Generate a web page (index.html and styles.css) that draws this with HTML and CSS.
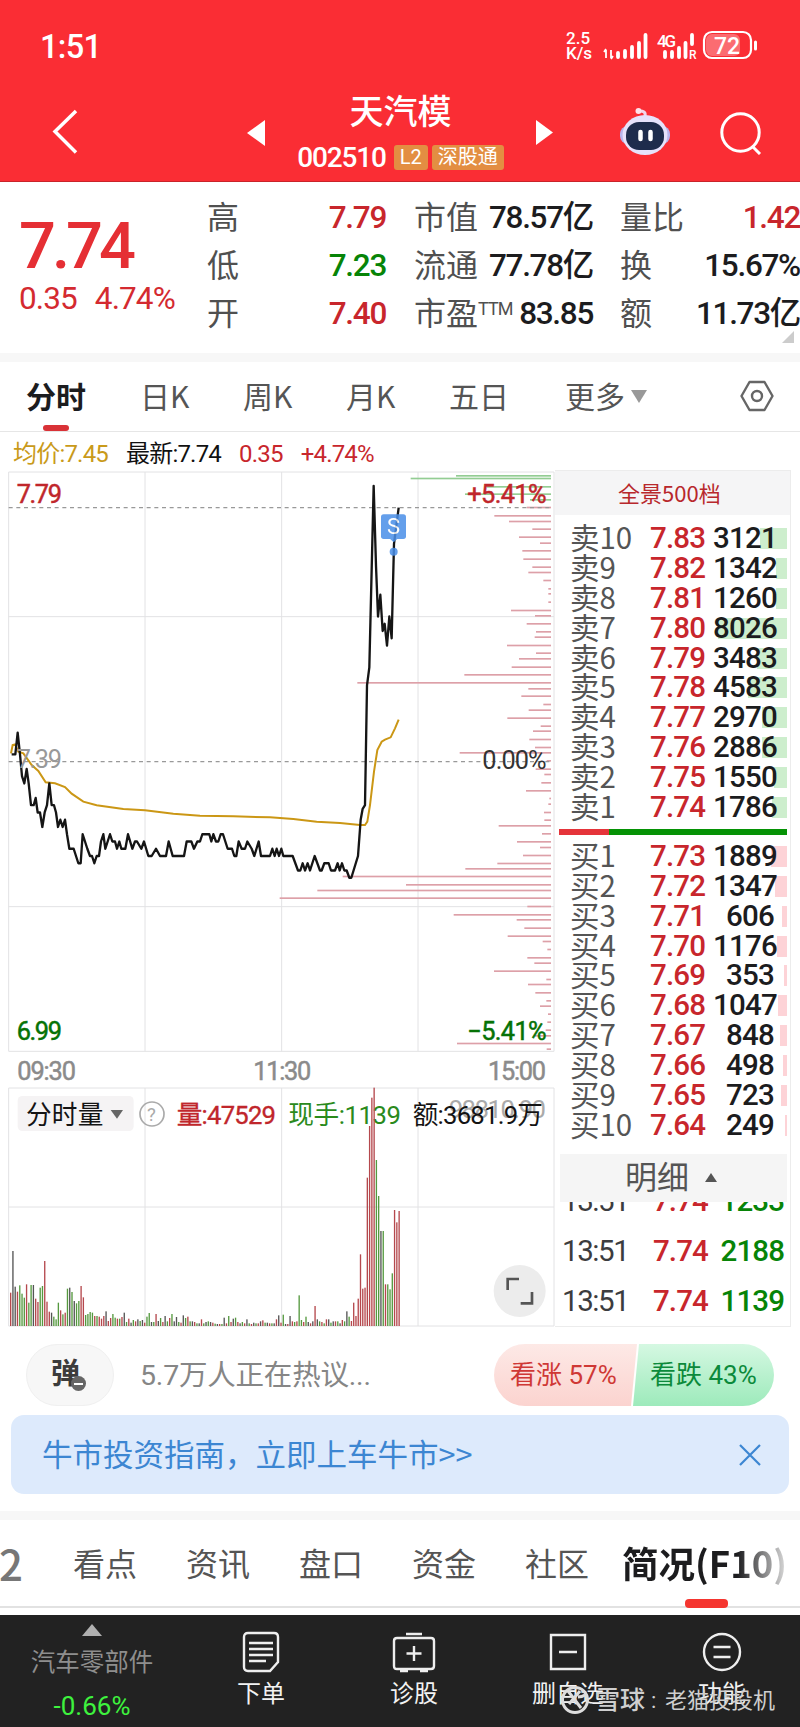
FILE: index.html
```html
<!DOCTYPE html>
<html lang="zh-CN">
<head>
    <meta charset="UTF-8">
    <meta name="viewport" content="width=device-width, initial-scale=1.0">
    <title>天汽模 002510</title>
    <link rel="stylesheet" href="styles.css">
</head>
<body>

<header class="header">
    <div class="status-bar">
        <span class="clock">1:51</span>
        <span class="speed">2.5<br>K/s</span>
        <svg class="signals" width="160" height="32" viewBox="0 0 160 32" fill="none" stroke="#fff">
            <path d="M4 28V20M2 22l2-3M9 20v8M11 26l-2 3" stroke-width="1.8"/>
            <path d="M16 27v-4M23 27v-6M30 27v-10M37 27v-14M43.500 27V5" stroke-width="3.800" stroke-linecap="round"/>
            <text x="55" y="17" textLength="19" class="net">4G</text>
            <path d="M63 27v-5M70 27v-5M77 27v-9M83.500 27v-14M90 14V5" stroke-width="3.800" stroke-linecap="round"/>
            <text x="87" y="29" class="roam">R</text>
            <rect x="102" y="2" width="47" height="26" rx="8" stroke-width="2.200"/>
            <rect x="104" y="4" width="34" height="22" rx="6" fill="#fff" fill-opacity=".3" stroke="none"/>
            <path d="M153.500 12v7" stroke-width="3" stroke-linecap="round"/>
            <text x="112" y="24" class="battery">72</text>
        </svg>
    </div>
    <div class="nav">
        <svg class="back" width="30" height="50" viewBox="0 0 30 50" fill="none" stroke="#fff" stroke-width="3.500"><path d="M25 4L4 24.500l21 21"/></svg>
        <svg class="prev" width="18" height="26" viewBox="0 0 18 26"><path d="M18 0v26L0 13z" fill="#fff"/></svg>
        <div class="stock">
            <h1>天汽模</h1>
            <div class="code"><span class="num">002510</span><span class="badge">L2</span><span class="badge">深股通</span></div>
        </div>
        <svg class="next" width="17" height="25" viewBox="0 0 17 25"><path d="M0 0v25l17-12.500z" fill="#fff"/></svg>
        <svg class="robot" width="54" height="50" viewBox="0 0 54 50">
            <path d="M27 9c1-4-2-5-5-5" fill="none" stroke="#f2d5e8" stroke-width="3"/>
            <circle cx="20.500" cy="4" r="3" fill="#ffe1ea"/>
            <rect x="2" y="19" width="50" height="18" rx="8" fill="#b9b5ee"/>
            <ellipse cx="27" cy="28" rx="22.500" ry="20" fill="#e6e2fb"/>
            <rect x="8" y="15" width="38" height="28" rx="13" fill="#1e2c4c"/>
            <path d="M22.500 25v7M32.500 25v7" stroke="#fff" stroke-width="4.500" stroke-linecap="round"/>
        </svg>
        <svg class="search" width="44" height="44" viewBox="0 0 44 44" fill="none" stroke="#fff" stroke-width="3"><circle cx="21.500" cy="21.500" r="18.700"/><path d="M33 35l8 8"/></svg>
    </div>
</header>

<section class="quote">
    <div class="price">
        <div class="last">7.74</div>
        <div class="change"><span>0.35</span><span>4.74%</span></div>
    </div>
    <dl class="col col-a">
        <dt>高</dt><dd class="up">7.79</dd>
        <dt>低</dt><dd class="down">7.23</dd>
        <dt>开</dt><dd class="up">7.40</dd>
    </dl>
    <dl class="col col-b">
        <dt>市值</dt><dd>78.57亿</dd>
        <dt>流通</dt><dd>77.78亿</dd>
        <dt>市盈<sup>TTM</sup></dt><dd>83.85</dd>
    </dl>
    <dl class="col col-c">
        <dt>量比</dt><dd class="up">1.42</dd>
        <dt>换</dt><dd>15.67%</dd>
        <dt>额</dt><dd>11.73亿</dd>
    </dl>
    <i class="corner"></i>
</section>

<nav class="periods">
    <a class="active">分时</a>
    <a>日K</a>
    <a>周K</a>
    <a>月K</a>
    <a>五日</a>
    <a>更多</a>
    <i class="caret"></i>
    <svg class="gear" width="36" height="36" viewBox="0 0 36 36" fill="none" stroke="#666" stroke-width="2.400"><path d="M10.500 4h15L33.500 18l-8 14h-15L2.500 18z" stroke-linejoin="round"/><circle cx="18" cy="18" r="5"/></svg>
</nav>

<main class="main">
    <div class="charts">
        <div class="info"><span class="avg">均价:7.45</span><span>最新:7.74</span><span class="up">0.35</span><span class="up">+4.74%</span></div>

        <svg class="chart" width="555" height="615" viewBox="0 0 1665 1845">
            <g class="grid">
                <path d="M26 21H1662V1759H26zM435 21V1759M845 21V1759M1254 21V1759M26 455H1662M26 1325H1662"/>
            </g>
            <g id="levels"></g>
            <path class="dash" d="M26 128H1653M26 890H1653"/>
            <polyline class="avg-line" points="33,865 38,840 45,838 55,860 70,865 95,900 115,918 137,952 165,955 195,966 215,986 250,1010 290,1021 370,1032 435,1036 520,1046 600,1052 700,1054 810,1057 880,1062 950,1070 1020,1074 1080,1080 1095,1080 1102,1070 1110,1020 1122,920 1132,855 1145,830 1155,824 1172,817 1185,790 1196,764"/>
            <polyline id="priceLine" class="price-line"/>
            <g class="mark">
                <rect x="1143" y="148" width="75" height="74" rx="8"/>
                <path d="M1168 220h26l-13 12z"/>
                <circle cx="1181" cy="260" r="12"/>
                <text x="1161" y="208">S</text>
            </g>
            <g class="axis">
                <text x="50" y="113" textLength="136" class="t-up">7.79</text>
                <text x="50" y="909" textLength="136" class="t-mid">7.39</text>
                <text x="50" y="1725" textLength="136" class="t-down">6.99</text>
                <text x="1402" y="113" textLength="238" class="t-up">+5.41%</text>
                <text x="1447" y="911" textLength="193">0.00%</text>
                <text x="1402" y="1725" textLength="238" class="t-down">−5.41%</text>
                <text x="52" y="1844" textLength="176" class="t-time">09:30</text>
                <text x="760" y="1844" textLength="174" class="t-time">11:30</text>
                <text x="1464" y="1844" textLength="174" class="t-time">15:00</text>
            </g>
        </svg>

        <svg class="chart" width="555" height="250" viewBox="0 0 1665 750">
            <g class="grid">
                <path d="M26 24H1662V738H26zM435 24V738M845 24V738M1254 24V738M26 381H1662"/>
            </g>
            <rect x="53" y="48" width="348" height="105" rx="14" fill="#f5f3f4"/>
            <path d="M332 90h37l-18 26z" fill="#666"/>
            <circle cx="456" cy="102" r="36" fill="none" stroke="#aaa" stroke-width="5"/>
            <g class="legend">
                <text x="441" y="122" class="help">?</text>
                <text x="78" y="131" textLength="232">分时量</text>
                <text x="530" y="131" textLength="298" class="t-up">量:47529</text>
                <text x="865" y="131" textLength="338" class="t-green">现手:1139</text>
                <text x="1346" y="114" textLength="292" class="ghost">98810.90</text>
                <text x="1238" y="131" textLength="391">额:3681.9万</text>
            </g>
            <g id="volume"></g>
            <circle cx="1559" cy="633" r="78" fill="#ececec"/>
            <path d="M1523 630V597h34M1596 636v34h-34" fill="none" stroke="#555" stroke-width="8"/>
        </svg>
    </div>

    <aside class="book">
        <div class="book-head">全景500档</div>
        <div class="rows" id="asks"></div>
        <div class="ratio"><i></i></div>
        <div class="rows" id="bids"></div>
        <div class="detail-head">明细<i></i></div>
        <div class="ticks">
            <div class="tick"><span>13:51</span><span class="up">7.74</span><span class="down">1233</span></div>
            <div class="tick"><span>13:51</span><span class="up">7.74</span><span class="down">2188</span></div>
            <div class="tick"><span>13:51</span><span class="up">7.74</span><span class="down">1139</span></div>
        </div>
    </aside>
</main>

<section class="talk">
    <div class="danmu">弹<i></i></div>
    <div class="talk-text">5.7万人正在热议...</div>
    <div class="vote"><span class="bull">看涨 57%</span><span class="bear">看跌 43%</span></div>
</section>

<section class="banner">
    <span>牛市投资指南，立即上车牛市&gt;&gt;</span>
    <svg width="24" height="24" viewBox="0 0 24 24" fill="none" stroke="#3c86d2" stroke-width="2.200"><path d="M2 2l20 20M22 2L2 22"/></svg>
</section>

<nav class="sections">
    <a class="cut">2</a>
    <a>看点</a>
    <a>资讯</a>
    <a>盘口</a>
    <a>资金</a>
    <a>社区</a>
    <a class="active">简况(F10)</a>
</nav>

<footer class="toolbar">
    <div class="sector">
        <i></i>
        <span>汽车零部件</span>
        <b>-0.66%</b>
    </div>
    <div class="tool">
        <svg width="44" height="44" viewBox="0 0 44 44"><path d="M9 3h26q4 0 4 4v25l-8 9H9q-4 0-4-4V7q0-4 4-4zM10 13h24M10 19h24M10 25h24M10 31h17"/></svg>
        <span>下单</span>
    </div>
    <div class="tool">
        <svg width="44" height="44" viewBox="0 0 44 44"><path d="M14 4h16M5 8h34q3 0 3 3v25q0 3-3 3H5q-3 0-3-3V11q0-3 3-3zM22 16v15M14.500 23.500h15M8 41h8M28 41h8"/></svg>
        <span>诊股</span>
    </div>
    <div class="tool">
        <svg width="44" height="44" viewBox="0 0 44 44"><path d="M5 5h34v34H5zM13 22h18"/></svg>
        <span>删自选</span>
    </div>
    <div class="tool">
        <svg width="44" height="44" viewBox="0 0 44 44"><path d="M13.500 17h17M13.500 27h17"/><circle cx="22" cy="22" r="18"/></svg>
        <span>功能</span>
    </div>
    <div class="watermark">
        <svg width="30" height="30" viewBox="0 0 30 30" fill="none" stroke="#ddd" stroke-width="3"><circle cx="15" cy="15" r="12.500"/><path d="M8 6l13 17M20 6L9 19M18 12c4 0 7-2 7-2"/></svg>
        <span class="brand">雪球</span><span class="colon">:</span><span>老猫投投机</span>
    </div>
</footer>

<script>
    const NS = 'http://www.w3.org/2000/svg';

    const asks = [[7.83, 3121], [7.82, 1342], [7.81, 1260], [7.80, 8026], [7.79, 3483], [7.78, 4583], [7.77, 2970], [7.76, 2886], [7.75, 1550], [7.74, 1786]];
    const bids = [[7.73, 1889], [7.72, 1347], [7.71, 606], [7.70, 1176], [7.69, 353], [7.68, 1047], [7.67, 848], [7.66, 498], [7.65, 723], [7.64, 249]];

    // x position, price in cents over 7.00
    const prices = [
        35,40, 46,40, 53,43, 60,40, 66,37, 73,36, 80,38, 86,36, 93,33, 101,33, 107,34, 113,32, 120,32, 127,30, 134,32, 141,33,
        148,36, 155,33, 162,33, 168,32, 174,30, 181,31, 188,30, 195,31, 201,29, 208,27, 221,27, 235,25, 242,25, 248,29, 262,27,
        270,26, 276,26, 283,25, 290,26, 297,26, 303,28, 310,29, 316,27, 330,29, 337,28, 345,28, 351,27, 358,28, 364,27, 376,27,
        384,29, 397,27, 405,28, 411,28, 424,27, 432,28, 445,26, 455,26, 468,27, 480,26, 498,26, 506,28, 518,26, 552,26, 560,28,
        574,28, 582,27, 592,28, 600,28, 607,29, 628,29, 634,28, 640,29, 648,28, 655,28, 662,29, 669,29, 683,27, 696,27, 703,26,
        709,26, 716,28, 725,27, 735,27, 742,28, 755,27, 763,26, 776,28, 783,26, 810,26, 817,27, 824,26, 830,27, 837,26, 844,27,
        850,26, 878,26, 894,24, 901,24, 908,25, 915,24, 923,25, 930,24, 944,26, 960,24, 965,24, 973,25, 986,25, 993,24, 1005,24,
        1013,25, 1019,24, 1026,25, 1033,24, 1040,24, 1048,23, 1054,23, 1074,26, 1082,31, 1088,32.5, 1095,33, 1101,49.5, 1108,52,
        1121,77, 1128,66, 1134,59, 1141,62, 1148,57, 1154,58, 1161,55, 1168,59, 1175,56, 1182,69, 1196,74
    ];

    // y position, bar length
    const levels = [
        33,285, 41,421, 66,193, 88,258, 105,63, 128,73, 153,170, 170,126, 193,56, 217,96, 235,33, 258,86, 283,83, 307,56, 323,68,
        347,23, 372,8, 387,8, 412,8, 437,120, 453,48, 477,73, 501,45, 517,49, 542,132, 565,45, 582,96, 607,118, 630,260, 654,581,
        672,68, 694,89, 719,23, 736,67, 760,131, 784,31, 799,54, 824,65, 848,48, 864,274, 888,13, 913,46, 929,20, 954,29, 978,75,
        1001,5, 1018,8, 1043,21, 1066,20, 1083,157, 1107,27, 1131,102, 1148,33, 1172,84, 1196,161, 1212,257, 1235,625, 1260,435,
        1277,701, 1300,814, 1325,71, 1350,292, 1365,103, 1390,80, 1414,130, 1430,25, 1454,11, 1479,71, 1495,50, 1519,171, 1544,14,
        1559,69, 1584,47, 1608,14, 1624,33, 1648,9, 1672,11, 1696,16, 1713,50, 1736,282, 1753,13
    ];

    const volume = ('100r 225k 118k 103r 122g 97g 85g 125r 70g 123g 123k 82r 72r 115g 120g 195r 73r 43r 40k 28g 20g 70g 47r 35g 40r 112g 115k 102g 75k 68g 75g 120r 86r ' +
        '33g 36g 42g 40g 30r 30g 28r 22r 30r 44k 15r 24r 36g 25g 22r 22g 27r 40k 12g 22r 10k 18g 14r 20k 15g 18k 10r 28g 39g 12k 12g 36r 15k 24g 12r 30k 14g 24r 36g ' +
        '14k 27k 12g 10r 32k 24g 28r 14g 14k 12r 8g 8k 20r 8g 12k 14g 12k 10r 7g 6k 6r 6g 25k 8r 30g 12r 22k 25g 12r 8k 12g 8r 20k 8g 6r 10k 8g 8r 14k 17r 10g 10k ' +
        '8r 8g 8k 20r 32k 10r 34g 6k 6r 30k 14r 12g 14r 92g 18g 12r 28g 12k 8r 14k 60r 20k 14g 12r 8g 20r 20k 10g 14k 14r 14g 8k 18r 14g 44k 28g 15r 70r 30r 82r ' +
        '215r 112r 115r 445r 600r 685r 715r 498g 390g 285k 285g 125r 125g 110g 158g 348r 311r 345r').split(' ');

    function drawRows(id, name, data, start, step) {
        document.getElementById(id).innerHTML = data.map((d, i) =>
            `<div class="row"><i style="width:${(d[1] * 0.0086).toFixed(1)}px"></i><span class="level">${name}${start + i * step}</span>` +
            `<span class="up">${d[0].toFixed(2)}</span><span class="amount">${d[1]}</span></div>`).join('');
    }

    function addRect(parent, x, y, w, h, cls) {
        const rect = document.createElementNS(NS, 'rect');
        rect.setAttribute('x', x);
        rect.setAttribute('y', y);
        rect.setAttribute('width', w);
        rect.setAttribute('height', h);
        rect.setAttribute('class', cls);
        parent.appendChild(rect);
    }

    drawRows('asks', '卖', asks, 10, -1);
    drawRows('bids', '买', bids, 1, 1);

    let points = '';
    for (let i = 0; i < prices.length; i += 2) {
        points += prices[i] + ',' + (890 - (prices[i + 1] - 39) * 21.77).toFixed(1) + ' ';
    }
    document.getElementById('priceLine').setAttribute('points', points);

    const levelGroup = document.getElementById('levels');
    for (let i = 0; i < levels.length; i += 2) {
        addRect(levelGroup, 1653 - levels[i + 1], levels[i] - 3, levels[i + 1], 5, levels[i] < 110 ? 'lv-green' : 'lv-red');
    }

    const volumeGroup = document.getElementById('volume');
    volume.forEach((v, i) => {
        const h = parseInt(v);
        addRect(volumeGroup, (30 + i * 6.815).toFixed(1), 738 - h, 4, h, 'v-' + v.slice(-1));
    });
</script>

</body>
</html>
```
FILE: styles.css
```css
* {
    box-sizing: border-box;
}

body {
    margin: 0;
    width: 800px;
    height: 1727px;
    overflow: hidden;
    background: #fff;
    color: #1c1c1e;
    font-family: Roboto, 'Noto Sans CJK SC', sans-serif;
}

h1, dl, dd {
    margin: 0;
}

svg {
    display: block;
    flex: none;
}

.up {
    color: #c8262c;
}

.down {
    color: #078407;
}

/* header */
.header {
    height: 182px;
    background: #fa2d34;
    border-bottom: 1px solid #c9242a;
    color: #fff;
}

.status-bar {
    display: flex;
    height: 90px;
    padding: 30px 42px 0 40px;
}

.clock {
    font-size: 32.5px;
    font-weight: 500;
    line-height: 34px;
    letter-spacing: -0.7px;
}

.speed {
    margin-left: auto;
    width: 36px;
    padding-top: 1px;
    font-size: 17px;
    font-weight: 500;
    line-height: 15px;
}

.signals text {
    fill: #fff;
    stroke: none;
    font-weight: 500;
}

.signals {
    margin-right: -4px;
}

.net {
    font-size: 17px;
}

.roam {
    font-size: 12px;
}

.battery {
    font-size: 23px;
}

.nav {
    display: flex;
    height: 91px;
    padding-left: 51px;
}

.back {
    margin-top: 17px;
}

.prev {
    margin: 30px 0 0 166px;
}

.stock {
    width: 271px;
    text-align: center;
}

.stock h1 {
    font-size: 34px;
    line-height: 40px;
    font-weight: 500;
    font-family: 'Noto Sans CJK SC', sans-serif;
}

.code {
    display: flex;
    justify-content: center;
    gap: 4px;
    margin-top: 14px;
    font-size: 28px;
    line-height: 28px;
    letter-spacing: -1.2px;
}

.code .num {
    margin-right: 4px;
    font-weight: 500;
}

.badge {
    height: 25px;
    margin-top: 1px;
    padding: 0 6px;
    border-radius: 3px;
    background: #e38e42;
    font-size: 20px;
    line-height: 24px;
    letter-spacing: 0;
}

.next {
    margin: 30px 0 0 0;
}

.robot {
    margin: 17px 0 0 65px;
}

.search {
    margin: 21px 0 0 47px;
}

/* quote */
.quote {
    position: relative;
    display: flex;
    height: 171px;
    padding-top: 12px;
}

.price {
    width: 207px;
    padding: 19px 0 0 19px;
    color: #e52f34;
}

.last {
    font-size: 65px;
    line-height: 66px;
    font-weight: 500;
    letter-spacing: -4px;
}

.change {
    display: flex;
    gap: 18px;
    margin-top: 3px;
    font-size: 31.5px;
    line-height: 34px;
    letter-spacing: -0.9px;
    color: #d42a30;
}

.col {
    display: grid;
    grid-template-columns: 66px 1fr;
    grid-auto-rows: 48px;
    font-size: 32px;
    line-height: 48px;
}

.col dt {
    color: #505050;
    white-space: nowrap;
}

.col dd {
    text-align: right;
    font-size: 31.5px;
    font-weight: 500;
    letter-spacing: -1.3px;
    white-space: nowrap;
}

.col-a {
    width: 179px;
}

.col-b {
    width: 179px;
    margin-left: 28px;
}

.col-c {
    width: 180px;
    margin-left: 27px;
}

sup {
    font-size: 18px;
    line-height: 0;
    vertical-align: 10px;
    letter-spacing: -1px;
}

.corner {
    position: absolute;
    right: 6px;
    bottom: 10px;
    border: 6px solid transparent;
    border-right-color: #ccc;
    border-bottom-color: #ccc;
}

/* period tabs */
.periods {
    display: flex;
    height: 79px;
    padding-left: 26px;
    border-top: 9px solid #f7f7f7;
    border-bottom: 1px solid #e6e6e6;
    font-size: 30px;
    line-height: 66px;
    color: #555;
    font-family: 'Noto Sans CJK SC', sans-serif;
}

.periods a {
    width: 103px;
}

.periods a:first-child {
    width: 114px;
}

.periods a:nth-child(2) {
    width: 103px;
}

.periods a:nth-child(5) {
    width: 116px;
}

.periods a:nth-child(6) {
    width: 66px;
}

.periods .active {
    position: relative;
    color: #1c1c1e;
    font-weight: 700;
}

.periods .active::after {
    content: '';
    position: absolute;
    left: 17px;
    bottom: 0;
    width: 26px;
    height: 6px;
    border-radius: 3px;
    background: #d93237;
}

.caret {
    height: 13px;
    margin-top: 28px;
    border: 8px solid transparent;
    border-top: 13px solid #999;
    border-bottom: 0;
}

.gear {
    margin: 16px 0 0 92px;
}

/* charts */
.main {
    display: flex;
    height: 889px;
}

.charts {
    width: 555px;
}

.info {
    display: flex;
    gap: 18px;
    height: 33px;
    padding: 5px 0 0 13px;
    font-size: 24px;
    line-height: 34px;
    letter-spacing: -0.8px;
    color: #111;
    white-space: nowrap;
}

.info .avg {
    color: #c99a1a;
}

.chart {
    overflow: visible;
    font-family: Roboto, 'Noto Sans CJK SC', sans-serif;
}

.chart .grid {
    fill: none;
    stroke: #e2e2e4;
    stroke-width: 3;
}

.dash {
    stroke: #999;
    stroke-width: 4;
    stroke-dasharray: 12 11;
}

.avg-line {
    fill: none;
    stroke: #cb9715;
    stroke-width: 6;
}

.price-line {
    fill: none;
    stroke: #151515;
    stroke-width: 7;
    stroke-linejoin: round;
}

.lv-red {
    fill: #dda0a8;
}

.lv-green {
    fill: #93cd93;
}

.mark {
    fill: #4a8fe8;
    opacity: 0.85;
}

.mark text {
    fill: #fff;
    font-size: 66px;
}

.axis text {
    font-size: 76px;
    fill: #333;
    stroke-width: 1.5;
}

.axis .t-up,
.legend .t-up {
    fill: #c0262b;
    stroke: #c0262b;
}

.axis .t-down {
    fill: #067206;
    stroke: #067206;
}

.axis .t-mid {
    fill: #999;
}

.axis .t-time {
    fill: #8b8b8b;
    stroke: #8b8b8b;
}

.legend text {
    font-size: 77px;
    fill: #141414;
}

.legend .t-green {
    fill: #2a8a1c;
}

.legend .ghost {
    fill: #aaa;
}

.legend .help {
    font-size: 56px;
    fill: #aaa;
}

.v-r {
    fill: #b5484d;
}

.v-g {
    fill: #55993f;
}

.v-k {
    fill: #555;
}

/* order book */
.book {
    width: 236px;
    height: 857px;
    margin-top: 38px;
    border: 1px solid #ececec;
    border-left: 0;
}

.book-head {
    height: 44px;
    background: #f5f5f6;
    color: #b8282c;
    font-family: 'Noto Sans CJK SC', sans-serif;
    font-size: 22px;
    line-height: 42px;
    padding-left: 63px;
}

.rows {
    margin-top: 8px;
}

.row {
    position: relative;
    display: grid;
    grid-template-columns: 80px 63px 61px;
    height: 29.9px;
    padding-left: 15px;
    font-size: 29.5px;
    line-height: 30px;
    letter-spacing: -0.8px;
}

.row span {
    position: relative;
}

.row .level {
    color: #555;
    font-family: 'Noto Sans CJK SC', sans-serif;
    line-height: 26px;
    letter-spacing: 0;
}

.row .amount {
    text-align: right;
}

.row i {
    position: absolute;
    right: 3px;
    top: 5px;
    height: 21px;
    background: #cdeecd;
}

#bids .row i {
    background: #fdd3d7;
}

.row .up,
.row .amount {
    font-weight: 500;
}

.ratio {
    width: 228px;
    height: 6px;
    margin: 7px 0 0 4px;
    background: #059205;
}

.ratio i {
    display: block;
    width: 50px;
    height: 6px;
    background: #e5343a;
}

#bids {
    margin-top: 6px;
}

.detail-head {
    display: flex;
    width: 227px;
    height: 48px;
    margin: 14px 0 0 5px;
    padding-left: 65px;
    background: #f5f5f5;
    color: #555;
    font-size: 32px;
    line-height: 49px;
}

.detail-head i {
    height: 9px;
    margin: 19px 0 0 16px;
    border: 6px solid transparent;
    border-top: 0;
    border-bottom: 9px solid #555;
}

.ticks {
    height: 124px;
    overflow: hidden;
}

.tick {
    display: grid;
    grid-template-columns: 91px 60px 71px;
    height: 50.3px;
    padding-left: 7px;
    font-size: 29.5px;
    line-height: 36px;
    letter-spacing: -0.9px;
    font-weight: 500;
}

.tick:first-child {
    margin-top: -19px;
}

.tick span:first-child {
    color: #3c3c3e;
    font-weight: 400;
    letter-spacing: -1.4px;
}

.tick .down {
    text-align: right;
}

/* discussion row */
.talk {
    display: flex;
    height: 94px;
    padding: 23px 26px 0;
    color: #868686;
}

.danmu {
    position: relative;
    width: 88px;
    height: 62px;
    padding-left: 24px;
    border: 1px solid #f0f0f0;
    border-radius: 31px;
    background: #f7f7f7;
    color: #3c3c3c;
    font-weight: 700;
    font-size: 29px;
    line-height: 58px;
}

.danmu i {
    position: absolute;
    left: 44px;
    top: 31px;
    width: 15px;
    height: 15px;
    border-radius: 50%;
    background: linear-gradient(#fff, #fff) center / 9px 2px no-repeat #666;
}

.talk-text {
    padding-left: 26px;
    font-size: 28.5px;
    line-height: 64px;
    letter-spacing: -0.2px;
}

.vote {
    display: flex;
    width: 280px;
    height: 62px;
    margin-left: auto;
    border-radius: 31px;
    overflow: hidden;
    font-size: 26px;
    line-height: 62px;
    letter-spacing: 0;
}

.bull {
    width: 143px;
    padding-left: 16px;
    color: #cf3835;
    background: linear-gradient(#fde9e6, #fbd3cf);
    clip-path: polygon(0 0, 100% 0, 137px 100%, 0 100%);
}

.bear {
    width: 141px;
    margin-left: -4px;
    padding-left: 17px;
    color: #0b8a3b;
    background: linear-gradient(#d5f8e2, #9deabb);
    clip-path: polygon(6px 0, 100% 0, 100% 100%, 0 100%);
}

.banner {
    display: flex;
    justify-content: space-between;
    align-items: center;
    height: 79px;
    margin: 0 11px;
    padding: 0 27px 4px 31px;
    border-radius: 13px;
    background: #ddeafc;
    color: #3c86d2;
    font-family: 'Noto Sans CJK SC', sans-serif;
    font-size: 30.5px;
}

.banner svg {
    margin-top: 4px;
}

/* content tabs */
.sections {
    display: flex;
    height: 97px;
    margin-top: 17px;
    border-top: 9px solid #f7f7f7;
    border-bottom: 2px solid #e2e2e2;
    font-family: 'Noto Sans CJK SC', sans-serif;
    font-size: 32px;
    line-height: 85px;
    color: #555;
}

.sections a {
    width: 113px;
    white-space: nowrap;
}

.sections .cut {
    width: 73px;
    font-size: 42px;
    font-weight: 500;
    color: #777;
    text-indent: -1px;
}

.sections a:nth-child(6) {
    width: 97px;
}

.sections .active {
    width: 177px;
    font-size: 36.5px;
    font-weight: 700;
    color: transparent;
    background: linear-gradient(90deg, #1c1c1e 115px, #ddd 165px);
    background-clip: text;
    -webkit-background-clip: text;
    position: relative;
}

.sections .active::after {
    content: '';
    position: absolute;
    left: 63px;
    bottom: -2px;
    width: 43px;
    height: 9px;
    border-radius: 4px;
    background: #f5352f;
}

/* bottom toolbar */
.toolbar {
    position: relative;
    display: flex;
    height: 112px;
    margin-top: 7px;
    background: #222;
    color: #f2f2f2;
}

.sector {
    display: flex;
    flex-direction: column;
    align-items: center;
    width: 184px;
    padding-top: 9px;
    font-size: 24.5px;
    line-height: 44px;
    color: #8e8e8e;
}

.sector i {
    border: 10px solid transparent;
    border-top: 0;
    border-bottom: 12px solid #b0b0b0;
}

.sector span {
    padding-top: 5px;
}

.sector b {
    margin-top: -1px;
    font-weight: 400;
    font-size: 26px;
    letter-spacing: 0;
    color: #3ef23e;
}

.tool {
    display: flex;
    flex-direction: column;
    align-items: center;
    width: 154px;
    padding-top: 15px;
    font-size: 24px;
    line-height: 40px;
}

.tool:nth-child(2) {
    margin-right: -1px;
}

.tool svg {
    fill: none;
    stroke: #eee;
    stroke-width: 2.4;
}

.watermark {
    position: absolute;
    left: 560px;
    top: 67px;
    display: flex;
    font-size: 22px;
    line-height: 37px;
    color: #cfcfcf;
    white-space: nowrap;
}

.watermark svg {
    margin: 3px 5px 0 0;
}

.watermark .brand {
    font-size: 25px;
    font-weight: 500;
}

.watermark .colon {
    width: 20px;
    padding-left: 6px;
}
```
